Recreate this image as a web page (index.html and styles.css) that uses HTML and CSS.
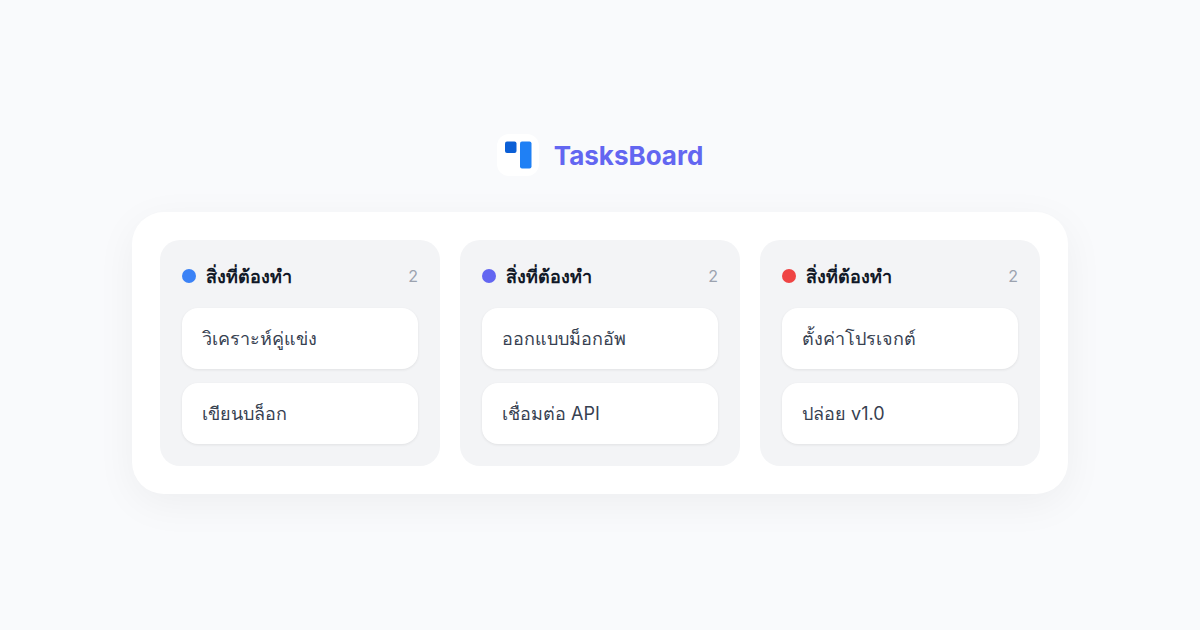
FILE: index.html
```html
<!DOCTYPE html>
<html lang="th">
<head>
  <meta charset="UTF-8" />
  <title>TasksBoard</title>
  <link rel="stylesheet" href="styles.css">
</head>
<body>
  <div class="page">
    <div class="brand">
      <div class="brand-logo">
        <svg width="28" height="28" viewBox="0 0 28 28">
          <rect x="1" y="0.5" width="11.5" height="11.5" rx="2" fill="#0b5fd6"/>
          <rect x="16" y="0.5" width="11.5" height="27" rx="2" fill="#1f80f5"/>
        </svg>
      </div>
      <span class="brand-name">TasksBoard</span>
    </div>

    <div class="board">
      <div class="column">
        <div class="column-head">
          <span class="dot dot-blue"></span>
          <span class="column-title">สิ่งที่ต้องทำ</span>
          <span class="count">2</span>
        </div>
        <div class="card">วิเคราะห์คู่แข่ง</div>
        <div class="card">เขียนบล็อก</div>
      </div>

      <div class="column">
        <div class="column-head">
          <span class="dot dot-indigo"></span>
          <span class="column-title">สิ่งที่ต้องทำ</span>
          <span class="count">2</span>
        </div>
        <div class="card">ออกแบบม็อกอัพ</div>
        <div class="card">เชื่อมต่อ API</div>
      </div>

      <div class="column">
        <div class="column-head">
          <span class="dot dot-red"></span>
          <span class="column-title">สิ่งที่ต้องทำ</span>
          <span class="count">2</span>
        </div>
        <div class="card">ตั้งค่าโปรเจกต์</div>
        <div class="card">ปล่อย v1.0</div>
      </div>
    </div>
  </div>
</body>
</html>
```

FILE: styles.css
```css
body {
  margin: 0;
  width: 1200px;
  height: 630px;
  overflow: hidden;
  background-color: #f9fafc;
  font-family: "Inter", "Noto Sans", sans-serif;
  color: #374151;
}

.page {
  display: flex;
  flex-direction: column;
  align-items: center;
  padding-top: 134px;
}

.brand {
  display: flex;
  align-items: center;
  gap: 15px;
  margin-bottom: 36px;
}

.brand-logo {
  display: flex;
  align-items: center;
  justify-content: center;
  width: 42px;
  height: 42px;
  background: #fff;
  border-radius: 12px;
}

.brand-name {
  font-size: 26px;
  font-weight: 700;
  color: #6366f1;
}

.board {
  display: flex;
  gap: 20px;
  padding: 28px;
  background: #fff;
  border-radius: 32px;
  box-shadow: 0 10px 40px rgba(0, 0, 0, 0.05);
}

.column {
  display: flex;
  flex-direction: column;
  gap: 14px;
  width: 236px;
  padding: 22px;
  background: #f3f4f6;
  border-radius: 20px;
}

.column-head {
  display: flex;
  align-items: center;
  gap: 10px;
  height: 28px;
  margin-bottom: 4px;
}

.dot {
  width: 14px;
  height: 14px;
  border-radius: 50%;
}

.dot-blue { background: #3b82f6; }
.dot-indigo { background: #6366f1; }
.dot-red { background: #ef4444; }

.column-title {
  flex: 1;
  font-size: 18px;
  font-weight: 700;
  color: #111827;
}

.count {
  font-size: 16px;
  color: #9ca3af;
}

.card {
  display: flex;
  align-items: center;
  height: 61px;
  padding: 0 20px;
  background: #fff;
  border-radius: 16px;
  font-size: 18px;
  box-shadow: 0 1px 3px rgba(0, 0, 0, 0.08);
}
```
